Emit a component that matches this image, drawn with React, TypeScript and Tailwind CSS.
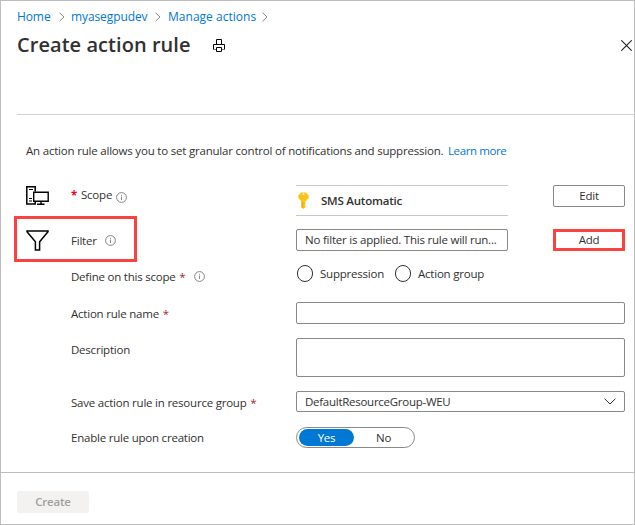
import React from "react";

function Info({ className = "" }: { className?: string }) {
  return (
    <svg className={`shrink-0 ${className}`} width="11" height="11" viewBox="0 0 11 11" fill="none">
      <circle cx="5.5" cy="5.5" r="4.9" stroke="#767676" strokeWidth="0.9" />
      <path d="M5.5 4.6V8M5.5 2.8v1" stroke="#8a8a8a" strokeWidth="1" />
    </svg>
  );
}

function Crumb() {
  return (
    <svg className="shrink-0" width="6" height="10" viewBox="0 0 6 10" fill="none">
      <path d="M.6.8 5 5 .6 9.2" stroke="#7a7a7a" strokeWidth="0.9" />
    </svg>
  );
}

function PrintIcon() {
  return (
    <svg width="12" height="13" viewBox="0 0 12 13" fill="none" stroke="#000">
      <path d="M3.5 5.5v-5h5v5" />
      <path d="M.5 10V5.5h11V10" />
      <path d="M0 10.5h3M9 10.5h3" stroke="#777" />
      <path d="M3.5 8.5h5v4h-5z" />
    </svg>
  );
}

function ComputerIcon() {
  return (
    <svg width="23" height="19" viewBox="0 0 23 19" fill="none" stroke="#000">
      <path d="M7 17.9H.8V.8h8.4v4.7M9.2 12v6H6" strokeWidth="1.5" />
      <path d="M3 3.5h4M3 12.5h3M3 15h3" strokeWidth="1" />
      <path d="M7.7 6.2h14.5v9H7.7z" fill="#fff" strokeWidth="1.4" />
      <path d="M15 15v3M11 18.2h7.5" strokeWidth="1.4" />
    </svg>
  );
}

function FunnelIcon() {
  return (
    <svg width="23" height="21" viewBox="0 0 23 21" fill="none" stroke="#000">
      <path d="M9.4 20v-8.2L1 1.8V1h21v.8l-8.4 10V20z" strokeWidth="1.5" />
    </svg>
  );
}

function KeyIcon() {
  return (
    <svg width="11" height="17" viewBox="0 0 11 17">
      <path d="M3 .4h5L10.7 3.5v2.6L7.4 9.6v5.6L5.5 17l-2-1.8V9.6L.3 6.1V3.5z" fill="#fcc419" />
      <path d="M3.5 9.6h1.7v6.9l-1.7-1.3z" fill="#f5a800" />
      <circle cx="5.5" cy="2.2" r="0.9" fill="#fff" />
    </svg>
  );
}

function Field({ icon, label, height, children }: {
  icon?: React.ReactNode;
  label: React.ReactNode;
  height: string;
  children: React.ReactNode;
}) {
  return (
    <div className={`relative grid grid-cols-[45px_225px_1fr] ${height}`}>
      <div className="flex items-start">{icon}</div>
      <div className="flex items-start">{label}</div>
      <div className="flex items-start justify-between">{children}</div>
    </div>
  );
}

const Star = () => <span className="ml-px text-[#a4262c]">*</span>;

export default function App() {
  return (
    <div className="flex h-[525px] w-[635px] flex-col border border-[#bdbdbd] bg-white font-['Open_Sans','Noto_Sans',sans-serif] text-[11.5px] leading-[16px] tracking-[-0.22px] whitespace-nowrap text-[#323130]">
      <nav className="flex h-[31px] items-center pl-4 text-[12px] text-[#0078d4]">
        <a className="w-[42px] tracking-[-0.1px]">Home</a>
        <Crumb />
        <a className="ml-[6px] w-[84px] tracking-[-0.1px]">myasegpudev</a>
        <Crumb />
        <a className="ml-[7px] w-[94px] tracking-[0.02px]">Manage actions</a>
        <Crumb />
      </nav>
      <header className="flex h-[27px] items-center pl-4">
        <h1 className="w-[196px] pb-[2px] text-[20px] leading-[25px] font-semibold tracking-[0.05px]">Create action rule</h1>
        <PrintIcon />
        <svg className="mr-[2px] ml-auto" width="11" height="11" viewBox="0 0 11 11">
          <path d="M.3.3l10.4 10.4M10.7.3.3 10.7" stroke="#222" strokeWidth="1.1" />
        </svg>
      </header>
      <div className="ml-4 h-[56px] shrink-0 border-b border-[#d2d2d2]" />
      <main className="h-[357px] shrink-0 pt-[28px] pr-[9px] pl-[25px]">
        <p className="mb-[26px] flex">
          <span className="w-[422px] tracking-[-0.2px]">
            An action rule allows you to set granular control of notifications and suppression.
          </span>
          <a className="tracking-[-0.4px] text-[#0078d4]">Learn more</a>
        </p>
        <Field
          height="h-[44px]"
          icon={<span className="mt-[1px]"><ComputerIcon /></span>}
          label={<><span className="mt-[3px] w-[10px] font-bold text-[#e00b1c]">*</span><span className="mt-[2px] w-[35px]">Scope</span><Info className="mt-[7px]" /></>}
        >
          <div className="flex h-[31px] w-[212px] items-center border-y border-[#c8c8c8] pl-[2px]">
            <KeyIcon />
            <span className="ml-[12px] font-semibold">SMS Automatic</span>
          </div>
          <button className="h-[22px] w-[72px] rounded-[2px] border border-[#8a8886] leading-[20px]">Edit</button>
        </Field>
        <Field
          height="h-[36px]"
          icon={<span className="mt-[1px]"><FunnelIcon /></span>}
          label={<><span className="mt-[4px] w-[34px]">Filter</span><Info className="mt-[6px]" /></>}
        >
          <div className="h-[22px] w-[212px] rounded-[2px] border border-[#8a8886] pl-[8px] leading-[20px]">
            No filter is applied. This rule will run...
          </div>
          <button className="h-[22px] w-[72px] border-[3px] border-[#fc4141] leading-[16px]">Add</button>
          <span className="absolute top-[-13px] left-[-12px] h-[46px] w-[123px] border-[3px] border-[#fc4141]" />
        </Field>
        <Field
          height="h-[37px]"
          label={<><span className="mt-[4px] w-[123px]">Define on this scope <Star /></span><Info className="mt-[6px]" /></>}
        >
          <div className="flex">
            <span className="ml-px h-[17px] w-[16px] rounded-full border border-[#323130]" />
            <span className="mt-px ml-[7px] w-[75px]">Suppression</span>
            <span className="h-[17px] w-[16px] rounded-full border border-[#323130]" />
            <span className="mt-px ml-[7px]">Action group</span>
          </div>
        </Field>
        <Field height="h-[36px]" label={<span className="mt-[4px]">Action rule name <Star /></span>}>
          <input className="h-[22px] w-full rounded-[2px] border border-[#8a8886]" />
        </Field>
        <Field height="h-[53px]" label={<span className="mt-[4px]">Description</span>}>
          <textarea className="h-[39px] w-full resize-none rounded-[2px] border border-[#8a8886]" />
        </Field>
        <Field height="h-[36px]" label={<span className="mt-[4px]">Save action rule in resource group <Star /></span>}>
          <div className="flex h-[21px] w-full items-center justify-between rounded-[2px] border border-[#8a8886] pr-[8px] pl-[8px]">
            <span className="tracking-[-0.27px]">DefaultResourceGroup-WEU</span>
            <svg width="12" height="7" viewBox="0 0 12 7" fill="none">
              <path d="M.5.6 6 6 11.5.6" stroke="#323130" />
            </svg>
          </div>
        </Field>
        <Field height="h-[21px]" label={<span className="mt-[3px]">Enable rule upon creation</span>}>
          <div className="flex h-[21px] w-[119px] rounded-full border border-[#8a8886] p-[1px] pl-[2px] text-center leading-[17px]">
            <span className="h-[17px] w-[56px] rounded-full bg-[#0078d4] text-white">Yes</span>
            <span className="w-[60px]">No</span>
          </div>
        </Field>
      </main>
      <footer className="border-t border-[#bdbdbd] pt-[18px] pl-4">
        <button className="h-[22px] w-[72px] rounded-[2px] bg-[#f3f2f1] font-semibold text-[#a19f9d]">Create</button>
      </footer>
    </div>
  );
}
